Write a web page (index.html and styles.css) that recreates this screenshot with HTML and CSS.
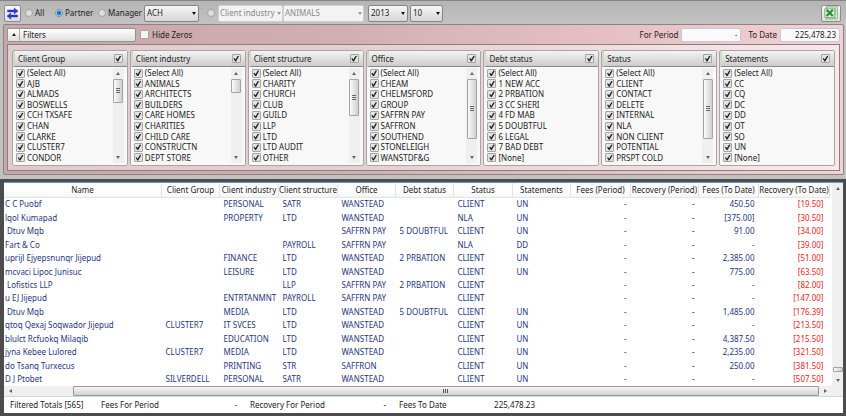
FILE: index.html
```
<!DOCTYPE html>
<html lang="en">
<head>
<meta charset="utf-8">
<title>Client fees and recovery</title>
<link rel="stylesheet" href="styles.css">
</head>
<body>
<header class="toolbar">
  <button class="tool" aria-label="Refresh">
    <svg width="13" height="13" viewBox="0 0 13 13"><path d="M1.5 3h6.7V.9L12 4 8.2 7V4.9H1.5z" fill="#2a3be0" stroke="#16208f" stroke-width=".4"/><path d="M11.5 8.1H4.8V6L1 9.1l3.8 3V10h6.7z" fill="#2a3be0" stroke="#16208f" stroke-width=".4"/></svg>
  </button>
  <label class="radio r-all"><input type="radio" name="scope">All</label>
  <label class="radio r-partner"><input type="radio" name="scope" checked>Partner</label>
  <label class="radio r-manager"><input type="radio" name="scope">Manager</label>
  <span class="pick pick-partner"><select aria-label="Partner"><option>ACH</option></select></span>
  <label class="radio r-field"><input type="radio" name="scope" aria-label="Field"></label>
  <span class="pick pick-field off"><select aria-label="Field name" disabled><option>Client industry</option></select></span>
  <span class="pick pick-value off"><select aria-label="Field value" disabled><option>ANIMALS</option></select></span>
  <span class="pick pick-year"><select aria-label="Year"><option>2013</option></select></span>
  <span class="pick pick-month"><select aria-label="Month"><option>10</option></select></span>
  <button class="tool excel" aria-label="Export to Excel">
    <svg width="14" height="14" viewBox="0 0 14 14"><rect x="2.5" y=".8" width="11" height="11.4" fill="#f4faf2" stroke="#6f9f68" stroke-width=".7"/><path d="M9 3.5h4M9 5.8h4M9 8.1h4M11.5 1v11" stroke="#8dbb85" stroke-width=".6"/><rect x=".8" y="2.2" width="10" height="9.4" rx=".6" fill="#dcefd8" stroke="#4f9350" stroke-width=".7"/><path d="M2.6 3.8l6.2 6.2M8.8 3.8L2.6 10" stroke="#2f8a38" stroke-width="2.2"/><path d="M1 13.2h12" stroke="#a9bda5" stroke-width=".6"/></svg>
  </button>
</header>

<section class="filters">
  <div class="filter-bar">
    <button class="expander"><span class="up-box"><i class="tri up"></i></span>Filters</button>
    <label class="hide-zeros"><input type="checkbox">Hide Zeros</label>
    <label class="amount period">For Period<input type="text" value="-"></label>
    <label class="amount to-date">To Date<input type="text" value="225,478.23"></label>
  </div>
  <div class="cards">
    <fieldset class="card">
      <label class="card-head">Client Group<input type="checkbox" checked></label>
      <div class="card-body">
        <div class="list">
          <label><input type="checkbox" checked>(Select All)</label>
          <label><input type="checkbox" checked>AJB</label>
          <label><input type="checkbox" checked>ALMADS</label>
          <label><input type="checkbox" checked>BOSWELLS</label>
          <label><input type="checkbox" checked>CCH TXSAFE</label>
          <label><input type="checkbox" checked>CHAN</label>
          <label><input type="checkbox" checked>CLARKE</label>
          <label><input type="checkbox" checked>CLUSTER7</label>
          <label><input type="checkbox" checked>CONDOR</label>
        </div>
        <div class="vbar"><i class="tri up"></i><span class="thumb t-mid grip"></span><i class="tri down"></i></div>
      </div>
    </fieldset>
    <fieldset class="card">
      <label class="card-head">Client industry<input type="checkbox" checked></label>
      <div class="card-body">
        <div class="list">
          <label><input type="checkbox" checked>(Select All)</label>
          <label><input type="checkbox" checked>ANIMALS</label>
          <label><input type="checkbox" checked>ARCHITECTS</label>
          <label><input type="checkbox" checked>BUILDERS</label>
          <label><input type="checkbox" checked>CARE HOMES</label>
          <label><input type="checkbox" checked>CHARITIES</label>
          <label><input type="checkbox" checked>CHILD CARE</label>
          <label><input type="checkbox" checked>CONSTRUCTN</label>
          <label><input type="checkbox" checked>DEPT STORE</label>
        </div>
        <div class="vbar"><i class="tri up"></i><span class="thumb t-short"></span><i class="tri down"></i></div>
      </div>
    </fieldset>
    <fieldset class="card">
      <label class="card-head">Client structure<input type="checkbox" checked></label>
      <div class="card-body">
        <div class="list">
          <label><input type="checkbox" checked>(Select All)</label>
          <label><input type="checkbox" checked>CHARITY</label>
          <label><input type="checkbox" checked>CHURCH</label>
          <label><input type="checkbox" checked>CLUB</label>
          <label><input type="checkbox" checked>GUILD</label>
          <label><input type="checkbox" checked>LLP</label>
          <label><input type="checkbox" checked>LTD</label>
          <label><input type="checkbox" checked>LTD AUDIT</label>
          <label><input type="checkbox" checked>OTHER</label>
        </div>
        <div class="vbar"><i class="tri up"></i><span class="thumb t-tall grip"></span><i class="tri down"></i></div>
      </div>
    </fieldset>
    <fieldset class="card">
      <label class="card-head">Office<input type="checkbox" checked></label>
      <div class="card-body">
        <div class="list">
          <label><input type="checkbox" checked>(Select All)</label>
          <label><input type="checkbox" checked>CHEAM</label>
          <label><input type="checkbox" checked>CHELMSFORD</label>
          <label><input type="checkbox" checked>GROUP</label>
          <label><input type="checkbox" checked>SAFFRN PAY</label>
          <label><input type="checkbox" checked>SAFFRON</label>
          <label><input type="checkbox" checked>SOUTHEND</label>
          <label><input type="checkbox" checked>STONELEIGH</label>
          <label><input type="checkbox" checked>WANSTDF&amp;G</label>
        </div>
        <div class="vbar"><i class="tri up"></i><span class="thumb t-long grip"></span><i class="tri down"></i></div>
      </div>
    </fieldset>
    <fieldset class="card">
      <label class="card-head">Debt status<input type="checkbox" checked></label>
      <div class="card-body">
        <div class="list">
          <label><input type="checkbox" checked>(Select All)</label>
          <label><input type="checkbox" checked>1 NEW ACC</label>
          <label><input type="checkbox" checked>2 PRBATION</label>
          <label><input type="checkbox" checked>3 CC SHERI</label>
          <label><input type="checkbox" checked>4 FD MAB</label>
          <label><input type="checkbox" checked>5 DOUBTFUL</label>
          <label><input type="checkbox" checked>6 LEGAL</label>
          <label><input type="checkbox" checked>7 BAD DEBT</label>
          <label><input type="checkbox" checked>[None]</label>
        </div>
      </div>
    </fieldset>
    <fieldset class="card">
      <label class="card-head">Status<input type="checkbox" checked></label>
      <div class="card-body">
        <div class="list">
          <label><input type="checkbox" checked>(Select All)</label>
          <label><input type="checkbox" checked>CLIENT</label>
          <label><input type="checkbox" checked>CONTACT</label>
          <label><input type="checkbox" checked>DELETE</label>
          <label><input type="checkbox" checked>INTERNAL</label>
          <label><input type="checkbox" checked>NLA</label>
          <label><input type="checkbox" checked>NON CLIENT</label>
          <label><input type="checkbox" checked>POTENTIAL</label>
          <label><input type="checkbox" checked>PRSPT COLD</label>
        </div>
        <div class="vbar"><i class="tri up"></i><span class="thumb t-long grip"></span><i class="tri down"></i></div>
      </div>
    </fieldset>
    <fieldset class="card">
      <label class="card-head">Statements<input type="checkbox" checked></label>
      <div class="card-body">
        <div class="list">
          <label><input type="checkbox" checked>(Select All)</label>
          <label><input type="checkbox" checked>CC</label>
          <label><input type="checkbox" checked>CQ</label>
          <label><input type="checkbox" checked>DC</label>
          <label><input type="checkbox" checked>DD</label>
          <label><input type="checkbox" checked>OT</label>
          <label><input type="checkbox" checked>SO</label>
          <label><input type="checkbox" checked>UN</label>
          <label><input type="checkbox" checked>[None]</label>
        </div>
      </div>
    </fieldset>
  </div>
</section>

<main class="results">
  <div class="grid-area">
    <table>
      <colgroup>
        <col><col class="c58"><col class="c59"><col class="c59"><col class="c58"><col class="c58"><col class="c59"><col class="c58"><col class="c60"><col class="c68"><col class="c60"><col class="c71">
      </colgroup>
      <thead>
        <tr><th>Name</th><th>Client Group</th><th>Client industry</th><th>Client structure</th><th>Office</th><th>Debt status</th><th>Status</th><th>Statements</th><th>Fees (Period)</th><th>Recovery (Period)</th><th>Fees (To Date)</th><th>Recovery (To Date)</th></tr>
      </thead>
      <tbody>
        <tr><td>C C Puobf</td><td></td><td>PERSONAL</td><td>SATR</td><td>WANSTEAD</td><td></td><td>CLIENT</td><td>UN</td><td>-</td><td>-</td><td>450.50</td><td>[19.50]</td></tr>
        <tr><td>lqol Kumapad</td><td></td><td>PROPERTY</td><td>LTD</td><td>WANSTEAD</td><td></td><td>NLA</td><td>UN</td><td>-</td><td>-</td><td>[375.00]</td><td>[30.50]</td></tr>
        <tr><td class="indent">Dtuv Mqb</td><td></td><td></td><td></td><td>SAFFRN PAY</td><td>5 DOUBTFUL</td><td>CLIENT</td><td>UN</td><td>-</td><td>-</td><td>91.00</td><td>[34.00]</td></tr>
        <tr><td>Fart &amp; Co</td><td></td><td></td><td>PAYROLL</td><td>SAFFRN PAY</td><td></td><td>NLA</td><td>DD</td><td>-</td><td>-</td><td>-</td><td>[39.00]</td></tr>
        <tr><td>uprijl Ejyepsnunqr Jijepud</td><td></td><td>FINANCE</td><td>LTD</td><td>WANSTEAD</td><td>2 PRBATION</td><td>CLIENT</td><td>UN</td><td>-</td><td>-</td><td>2,385.00</td><td>[51.00]</td></tr>
        <tr><td>mcvaci Lipoc Junisuc</td><td></td><td>LEISURE</td><td>LTD</td><td>WANSTEAD</td><td></td><td>CLIENT</td><td>UN</td><td>-</td><td>-</td><td>775.00</td><td>[63.50]</td></tr>
        <tr><td class="indent">Lofistics LLP</td><td></td><td></td><td>LLP</td><td>SAFFRN PAY</td><td>2 PRBATION</td><td>CLIENT</td><td></td><td>-</td><td>-</td><td>-</td><td>[82.00]</td></tr>
        <tr><td>u EJ Jijepud</td><td></td><td>ENTRTANMNT</td><td>PAYROLL</td><td>SAFFRN PAY</td><td></td><td>CLIENT</td><td></td><td>-</td><td>-</td><td>-</td><td>[147.00]</td></tr>
        <tr><td class="indent">Dtuv Mqb</td><td></td><td>MEDIA</td><td>LTD</td><td>WANSTEAD</td><td>5 DOUBTFUL</td><td>CLIENT</td><td>UN</td><td>-</td><td>-</td><td>1,485.00</td><td>[176.39]</td></tr>
        <tr><td>qtoq Qexaj Soqwador Jijepud</td><td>CLUSTER7</td><td>IT SVCES</td><td>LTD</td><td>WANSTEAD</td><td></td><td>CLIENT</td><td>UN</td><td>-</td><td>-</td><td>-</td><td>[213.50]</td></tr>
        <tr><td>blulct Rcfuokq Milaqib</td><td></td><td>EDUCATION</td><td>LTD</td><td>WANSTEAD</td><td></td><td>CLIENT</td><td>UN</td><td>-</td><td>-</td><td>4,387.50</td><td>[215.50]</td></tr>
        <tr><td>jyna Kebee Lulored</td><td>CLUSTER7</td><td>MEDIA</td><td>LTD</td><td>WANSTEAD</td><td></td><td>CLIENT</td><td>UN</td><td>-</td><td>-</td><td>2,235.00</td><td>[321.50]</td></tr>
        <tr><td>do Tsanq Turxecus</td><td></td><td>PRINTING</td><td>STR</td><td>SAFFRON</td><td></td><td>CLIENT</td><td>UN</td><td>-</td><td>-</td><td>250.00</td><td>[381.50]</td></tr>
        <tr><td>D J Ptobet</td><td>SILVERDELL</td><td>PERSONAL</td><td>SATR</td><td>WANSTEAD</td><td></td><td>CLIENT</td><td>UN</td><td>-</td><td>-</td><td>-</td><td>[507.50]</td></tr>
      </tbody>
    </table>
    <div class="vbar tall"><i class="tri up"></i><span class="thumb t-low"></span><i class="tri down"></i></div>
  </div>
  <div class="hbar"><i class="tri left"></i><span class="hthumb"></span><i class="tri right"></i></div>
  <footer class="totals">
    <span class="count">Filtered Totals [565]</span>
    <span class="total">Fees For Period<b>-</b></span>
    <span class="total">Recovery For Period<b>-</b></span>
    <span class="total">Fees To Date<b>225,478.23</b></span>
  </footer>
</main>
</body>
</html>
```
FILE: styles.css
```
* { box-sizing: border-box; }

body {
  margin: 0;
  min-height: 100vh;
  display: flex;
  flex-direction: column;
  background: #c1c1c1;
  font: 8px/10px "Noto Sans", "Open Sans", sans-serif;
  color: #222;
}

button, input, select { font: inherit; color: inherit; margin: 0; }

/* Toolbar */
.toolbar {
  display: flex;
  align-items: center;
  height: 24px;
  padding: 1px 5px 0 4px;
  border-top: 1px solid #858585;
  background: linear-gradient(#b4b4b4, #c3c3c3);
}
.tool {
  display: flex;
  align-items: center;
  justify-content: center;
  width: 17px;
  height: 17px;
  padding: 0;
  border: 1px solid #8c8c8c;
  border-radius: 2px;
  background: linear-gradient(#fafafa, #dcdcdc);
}
.excel { width: 20px; margin-left: auto; }

.radio { display: flex; align-items: center; gap: 2px; }
.r-all { width: 30px; margin-left: 4px; }
.r-partner { width: 43px; }
.r-manager { width: 46px; }
.r-field { width: 11px; margin-left: 8px; }
.radio input {
  appearance: none;
  flex: none;
  width: 8px;
  height: 8px;
  border: 1px solid #a2a2a2;
  border-radius: 50%;
  background: #dedede;
}
.radio input:checked { border-color: #7f8f9f; background: radial-gradient(circle, #0d6fae 0 1px, #2b9ad4 2px, #dceaf2 3px); }

.pick { position: relative; display: flex; height: 17px; }
.pick select {
  appearance: none;
  width: 100%;
  padding: 0 2px;
  border: 1px solid #858585;
  border-radius: 2px;
  background: linear-gradient(#f6f6f6, #d6d6d6);
  opacity: 1;
}
.pick::after {
  content: "";
  position: absolute;
  right: 3px;
  top: 7px;
  border: solid transparent;
  border-width: 3px 2px 0;
  border-top-color: #111;
}
.pick.off select { padding: 0 1px; background: #f3f3f3; border-color: #cfcfcf; color: #888; }
.pick.off::after { right: 2px; border-top-color: #999; }
.pick-partner { width: 55px; }
.pick-field { width: 65px; }
.pick-value { width: 81px; }
.pick-year { width: 40px; margin-left: 4px; }
.pick-month { width: 33px; margin-left: 2px; }

/* Filter panel */
.filters {
  margin: 0 2px 0 3px;
  padding: 0 3px 3px;
  border: 1px solid #8d8285;
  border-radius: 2px;
  background: linear-gradient(90deg, #c8a6a9, #d0afb2 40%, #e3bfc2 70%, #f2d2d4);
}
.filter-bar { display: flex; align-items: center; height: 19px; }
.expander {
  display: flex;
  align-items: center;
  gap: 3px;
  width: 129px;
  height: 14px;
  padding: 0;
  border: 1px solid #949494;
  border-radius: 2px;
  background: linear-gradient(#fff, #dedede);
}
.up-box { display: flex; align-items: center; justify-content: center; width: 12px; height: 12px; border-right: 1px solid #aaa; }
.hide-zeros { display: flex; align-items: center; gap: 3px; margin-left: 4px; }
.amount { display: flex; align-items: center; gap: 3px; }
.period { margin-left: auto; }
.to-date { margin-left: 7px; }
.amount input {
  width: 60px;
  height: 14px;
  padding: 0 3px;
  border: 1px solid #c5c8e0;
  border-radius: 2px;
  background: #fbfafb;
  text-align: right;
}

input[type="checkbox"] {
  appearance: none;
  display: flex;
  align-items: center;
  justify-content: center;
  flex: none;
  width: 9px;
  height: 9px;
  border: 1px solid #a3a3a3;
  border-radius: 1px;
  background: #f5f5f5;
}
input[type="checkbox"]:checked { background: #e4e4e4; }
input[type="checkbox"]:checked::after {
  content: "";
  width: 6px;
  height: 6px;
  background: #222;
  clip-path: polygon(4% 50%, 22% 42%, 38% 66%, 76% 4%, 98% 8%, 48% 98%, 32% 98%);
}

.cards {
  display: grid;
  grid-template-columns: repeat(7, 1fr);
  gap: 2px;
  padding: 5px 4px 4px;
  border: 1px solid #878083;
  background: linear-gradient(90deg, #e1cacb, #e4cfd0 40%, #fae8e8);
}
.card {
  min-width: 0;
  margin: 0;
  padding: 0;
  border: 1px solid #a9a4a5;
  border-radius: 2px;
  background: #f8f8f8;
}
.card-head {
  display: flex;
  align-items: center;
  justify-content: space-between;
  height: 16px;
  padding: 0 4px 0 3px;
  border-left: 2px solid #cbdccb;
  border-bottom: 1px solid #8a8a8a;
  background: linear-gradient(#f4f4f4, #ccc);
}
.card-body { display: flex; height: 98px; padding: 1px 3px 2px; }
.list { flex: 1; display: grid; grid-template-rows: repeat(9, 1fr); }
.list label { display: flex; align-items: center; gap: 2px; }

/* Scroll bars */
.tri { width: 0; height: 0; border: 2px solid transparent; flex: none; }
.tri.up { border-width: 0 2px 3px; border-bottom-color: #666; }
.tri.down { border-width: 3px 2px 0; border-top-color: #666; }
.tri.left { border-width: 2px 3px 2px 0; border-right-color: #666; }
.tri.right { border-width: 2px 0 2px 3px; border-left-color: #666; }
.up-box .tri.up { border-bottom-color: #222; }
.vbar {
  display: flex;
  flex-direction: column;
  align-items: center;
  gap: 4px;
  width: 11px;
  padding: 4px 0;
  background: #efefef;
}
.vbar .down { margin-top: auto; }
.thumb {
  display: flex;
  align-items: center;
  justify-content: center;
  width: 10px;
  border: 1px solid #a3a3a3;
  border-radius: 1px;
  background: linear-gradient(90deg, #fafafa, #cfcfcf);
}
.grip::after { content: ""; width: 4px; height: 6px; background: repeating-linear-gradient(#666 0 1px, transparent 1px 2px); }
.t-short { height: 14px; }
.t-mid { height: 24px; }
.t-tall { height: 37px; }
.t-long { height: 60px; }
.t-low { height: 5px; margin-top: auto; }

/* Results */
.results {
  flex: 1;
  display: flex;
  flex-direction: column;
  margin-top: 4px;
  border: 3px solid #4c4c4c;
  border-left-width: 4px;
  background: #fff;
}
.grid-area { flex: 1; display: flex; border-top: 1px solid #5fa0c8; }
table { flex: 1; width: 0; table-layout: fixed; border-collapse: collapse; }
.c58 { width: 58px; }
.c59 { width: 59px; }
.c60 { width: 60px; }
.c68 { width: 68px; }
.c71 { width: 71px; }
th, td { padding: 0; white-space: nowrap; line-height: 10px; }
th {
  height: 14px;
  border-right: 1px solid #e2e2e2;
  border-bottom: 1px solid #e6e6e6;
  background: linear-gradient(#fff 50%, #f4f5f6);
  font-weight: 400;
  text-align: center;
}
td { padding: 0 4px; color: #26367f; text-align: left; }
td:first-child { padding-left: 1px; }
td.indent:first-child { padding-left: 3px; }
td:nth-child(n+9) { text-align: right; }
td:nth-child(10) { color: #222; }
td:nth-child(12) { padding-right: 6px; color: #f52020; }
.tall { margin-left: 2px; }
.tall .down { margin-top: 3px; }
.hbar {
  display: flex;
  align-items: center;
  height: 11px;
  padding: 0 16px 0 5px;
  border-bottom: 1px solid #c3dcea;
  background: #efefef;
}
.hthumb {
  flex: 1;
  display: flex;
  align-items: center;
  justify-content: center;
  height: 10px;
  margin: 0 5px 0 61px;
  border: 1px solid #999;
  border-radius: 1px;
  background: linear-gradient(#f7f7f7, #cfcfcf);
}
.hthumb::after { content: ""; width: 6px; height: 4px; background: repeating-linear-gradient(90deg, #555 0 1px, transparent 1px 2px); }
.totals { display: flex; align-items: center; height: 16px; padding-left: 6px; }
.count { width: 91px; }
.total { display: flex; justify-content: space-between; width: 136px; margin-right: 13px; }
.total b { font-weight: 400; }
```
